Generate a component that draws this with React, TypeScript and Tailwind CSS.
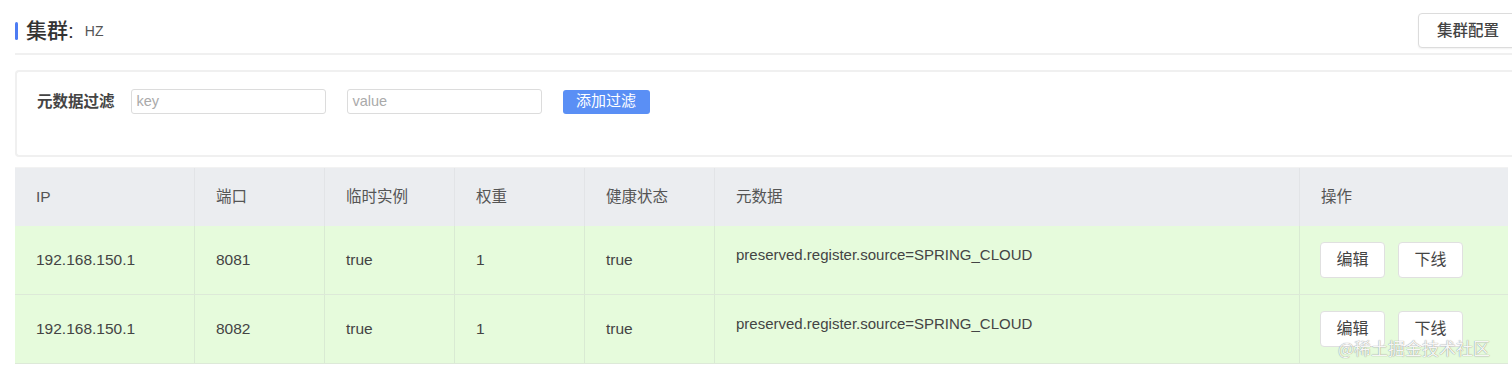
import React from "react";

const font = { fontFamily: '"Liberation Sans", "Noto Sans CJK SC", sans-serif' };

const cols = [
  { label: "IP", w: "w-[180px]" },
  { label: "端口", w: "w-[130px]" },
  { label: "临时实例", w: "w-[130px]" },
  { label: "权重", w: "w-[130px]" },
  { label: "健康状态", w: "w-[130px]" },
  { label: "元数据", w: "w-[585px]" },
  { label: "操作", w: "flex-1" },
];

const rows = [
  ["192.168.150.1", "8081", "true", "1", "true", "preserved.register.source=SPRING_CLOUD"],
  ["192.168.150.1", "8082", "true", "1", "true", "preserved.register.source=SPRING_CLOUD"],
];

export default function App() {
  return (
    <div className="relative w-[1512px] h-[371px] overflow-hidden bg-white text-[#4a4a4a]" style={font}>
      <div className="pl-[15px]">
        {/* header */}
        <div className="flex h-[55px] items-start justify-between border-b-2 border-[#f0f0f0]">
          <div className="mt-[19px] flex items-center">
            <div className="h-[18px] w-[3px] rounded-sm bg-[#4d7cf3]" />
            <span className="ml-[8px] text-[21px] font-medium leading-[24px] text-[#333]">集群:</span>
            <span className="ml-[11px] text-[14px] leading-[24px] text-[#555]">HZ</span>
          </div>
          <div className="mt-[13px] mr-[-6px] flex h-[35px] w-[100px] items-center justify-center rounded-[4px] border border-[#dcdcdc] bg-white text-[15.5px] font-medium text-[#444] shadow-[0_1px_2px_rgba(0,0,0,0.06)]">
            集群配置
          </div>
        </div>
        {/* filter card */}
        <div className="mt-[15px] h-[87px] rounded-l-[4px] border-2 border-r-0 border-[#f0f0f0] bg-white">
          <div className="flex items-center pt-[17px] pl-[20px]">
            <span className="text-[15.5px] font-bold text-[#444]">元数据过滤</span>
            <div className="ml-[16px] flex h-[25px] w-[195px] items-center rounded-[3px] border border-[#dcdcdc] px-[5px] text-[14.5px] text-[#aaa]">key</div>
            <div className="ml-[21px] flex h-[25px] w-[195px] items-center rounded-[3px] border border-[#dcdcdc] px-[5px] text-[14.5px] text-[#aaa]">value</div>
            <div className="ml-[21px] flex h-[24px] w-[87px] items-center justify-center rounded-[3px] bg-[#5a8ff5] text-[15px] text-white">添加过滤</div>
          </div>
        </div>
        {/* table */}
        <div className="mt-[10px] w-[1493px] border-t border-[#f2f2f2]">
          <div className="flex h-[58px] bg-[#ebedf0]">
            {cols.map((c, i) => (
              <div key={i} className={`${c.w} flex items-center border-r border-[#e2e4e7] pl-[21px] text-[15.5px] text-[#555] last:border-r-0`}>
                {c.label}
              </div>
            ))}
          </div>
          {rows.map((r, ri) => (
            <div key={ri} className="flex h-[69px] border-b border-[#dde9d8] bg-[#e6fbdc]">
              {r.map((v, i) => (
                <div
                  key={i}
                  className={`${cols[i].w} flex ${i === 5 ? "items-start pt-[18px] text-[15px]" : "items-center text-[15.5px]"} border-r border-[#d9ead3] pl-[21px] text-[#444]`}
                >
                  {v}
                </div>
              ))}
              <div className="flex flex-1 items-center gap-[13px] pl-[20px]">
                <div className="flex h-[36px] w-[65px] items-center justify-center rounded-[4px] border border-[#e0e0e0] bg-white text-[16px] text-[#444]">编辑</div>
                <div className="flex h-[36px] w-[65px] items-center justify-center rounded-[4px] border border-[#e0e0e0] bg-white text-[16px] text-[#444]">下线</div>
              </div>
            </div>
          ))}
        </div>
      </div>
      <div className="absolute left-[1338px] top-[335px] text-[17px] text-[#f6f6f6] [text-shadow:0_0_1px_rgba(0,0,0,0.55)]" style={{ fontFamily: '"Noto Sans CJK SC", sans-serif' }}>
        @稀土掘金技术社区
      </div>
    </div>
  );
}
